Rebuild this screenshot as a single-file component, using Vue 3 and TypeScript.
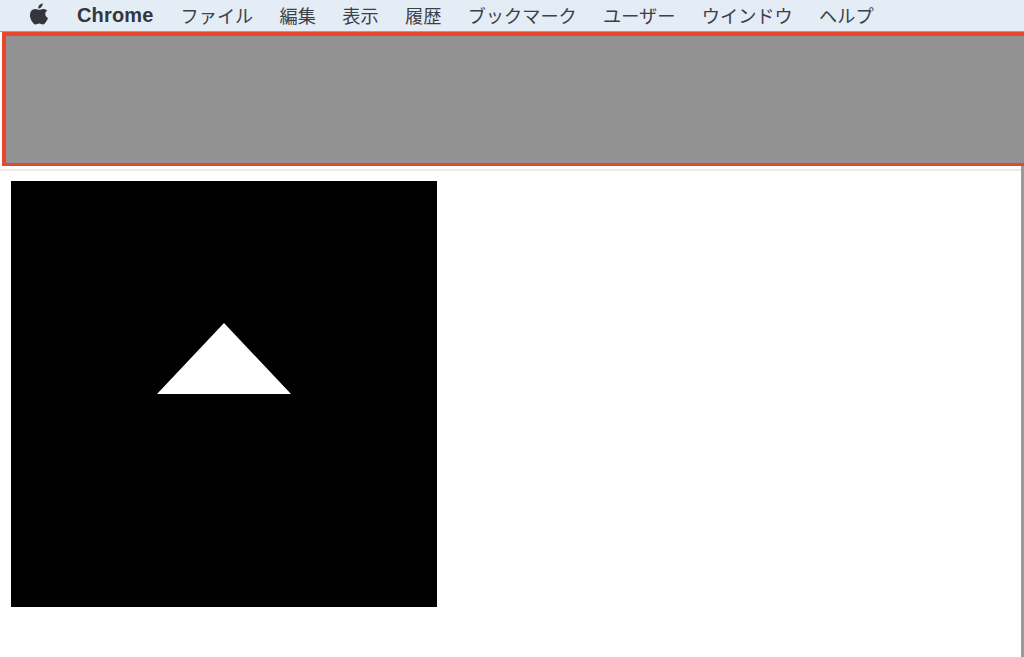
<script setup lang="ts">
const menus: string[] = ['ファイル', '編集', '表示', '履歴', 'ブックマーク', 'ユーザー', 'ウインドウ', 'ヘルプ']
</script>

<template>
  <div class="page">
    <header class="menubar">
      <svg class="apple" viewBox="0 0 18 22" width="18" height="22" aria-hidden="true">
        <path d="M12.6 0.4c.1 1.5-.4 2.7-1.2 3.6-.9 1-2 1.6-3.2 1.5-.1-1.4.5-2.7 1.2-3.5C10.300 1 11.600.4 12.600.4z" />
        <path d="M17.300 7.500c-1.300.9-2 2.100-2 3.600 0 1.800 1 3.200 2.700 3.900-.4 1.200-1 2.400-1.700 3.500-1 1.500-2 2.900-3.500 2.900-1.400 0-1.900-.9-3.600-.9-1.700 0-2.300.9-3.600.9-1.500.1-2.600-1.500-3.600-3C.5 16.200-.1 13.800 0 11.800c.1-2.200.9-3.700 2.200-4.700 1-.8 2.200-1.200 3.300-1.200 1.500 0 2.500.9 3.700.9 1.200 0 2-.9 3.900-.9 1.700 0 3.200.6 4.200 1.600z" />
      </svg>
      <span class="brand">Chrome</span>
      <nav class="menus">
        <span v-for="menu in menus" :key="menu" class="menu">{{ menu }}</span>
      </nav>
    </header>
    <section class="toolbar" />
    <div class="divider" />
    <main class="content">
      <div class="canvas">
        <svg viewBox="0 0 426 426" width="426" height="426" aria-hidden="true">
          <polygon points="213,142 280,213 146,213" fill="#fff" />
        </svg>
      </div>
    </main>
  </div>
</template>

<style scoped>
.page {
  width: 1024px;
  height: 657px;
  overflow: hidden;
  background: #fff;
  display: flex;
  flex-direction: column;
}
.menubar {
  box-sizing: border-box;
  height: 32px;
  flex: none;
  display: flex;
  align-items: center;
  padding-left: 30px;
  background: #e4ecf6;
  border-bottom: 1px solid #9aa0a8;
  color: #33373d;
}
.apple {
  fill: #33373d;
  flex: none;
  margin-top: -3px;
}
.brand {
  margin-left: 29px;
  font: 700 20px/28px "Liberation Sans", Arial, sans-serif;
  letter-spacing: 0.15px;
  width: 77px;
  margin-top: -1px;
}
.menus {
  display: flex;
  gap: 26.3px;
  margin-left: 26.500px;
  margin-top: -2px;
  font: 400 18.2px/28px "Noto Sans CJK JP", "Noto Sans", sans-serif;
  white-space: nowrap;
  color: #3c4047;
}
.toolbar {
  box-sizing: border-box;
  height: 134px;
  flex: none;
  margin-left: 2px;
  background: #929292;
  border: 4px solid #e8472b;
  border-right: 0;
  border-bottom-width: 3px;
}
.divider {
  height: 2px;
  flex: none;
  margin-top: 3px;
  background: #ececec;
}
.content {
  flex: 1;
  margin-top: -5px;
  padding: 15px 0 0 11px;
  border-right: 3px solid #9a9a9a;
}
.canvas {
  width: 426px;
  height: 426px;
  background: #000;
}
.canvas svg {
  display: block;
}
</style>
